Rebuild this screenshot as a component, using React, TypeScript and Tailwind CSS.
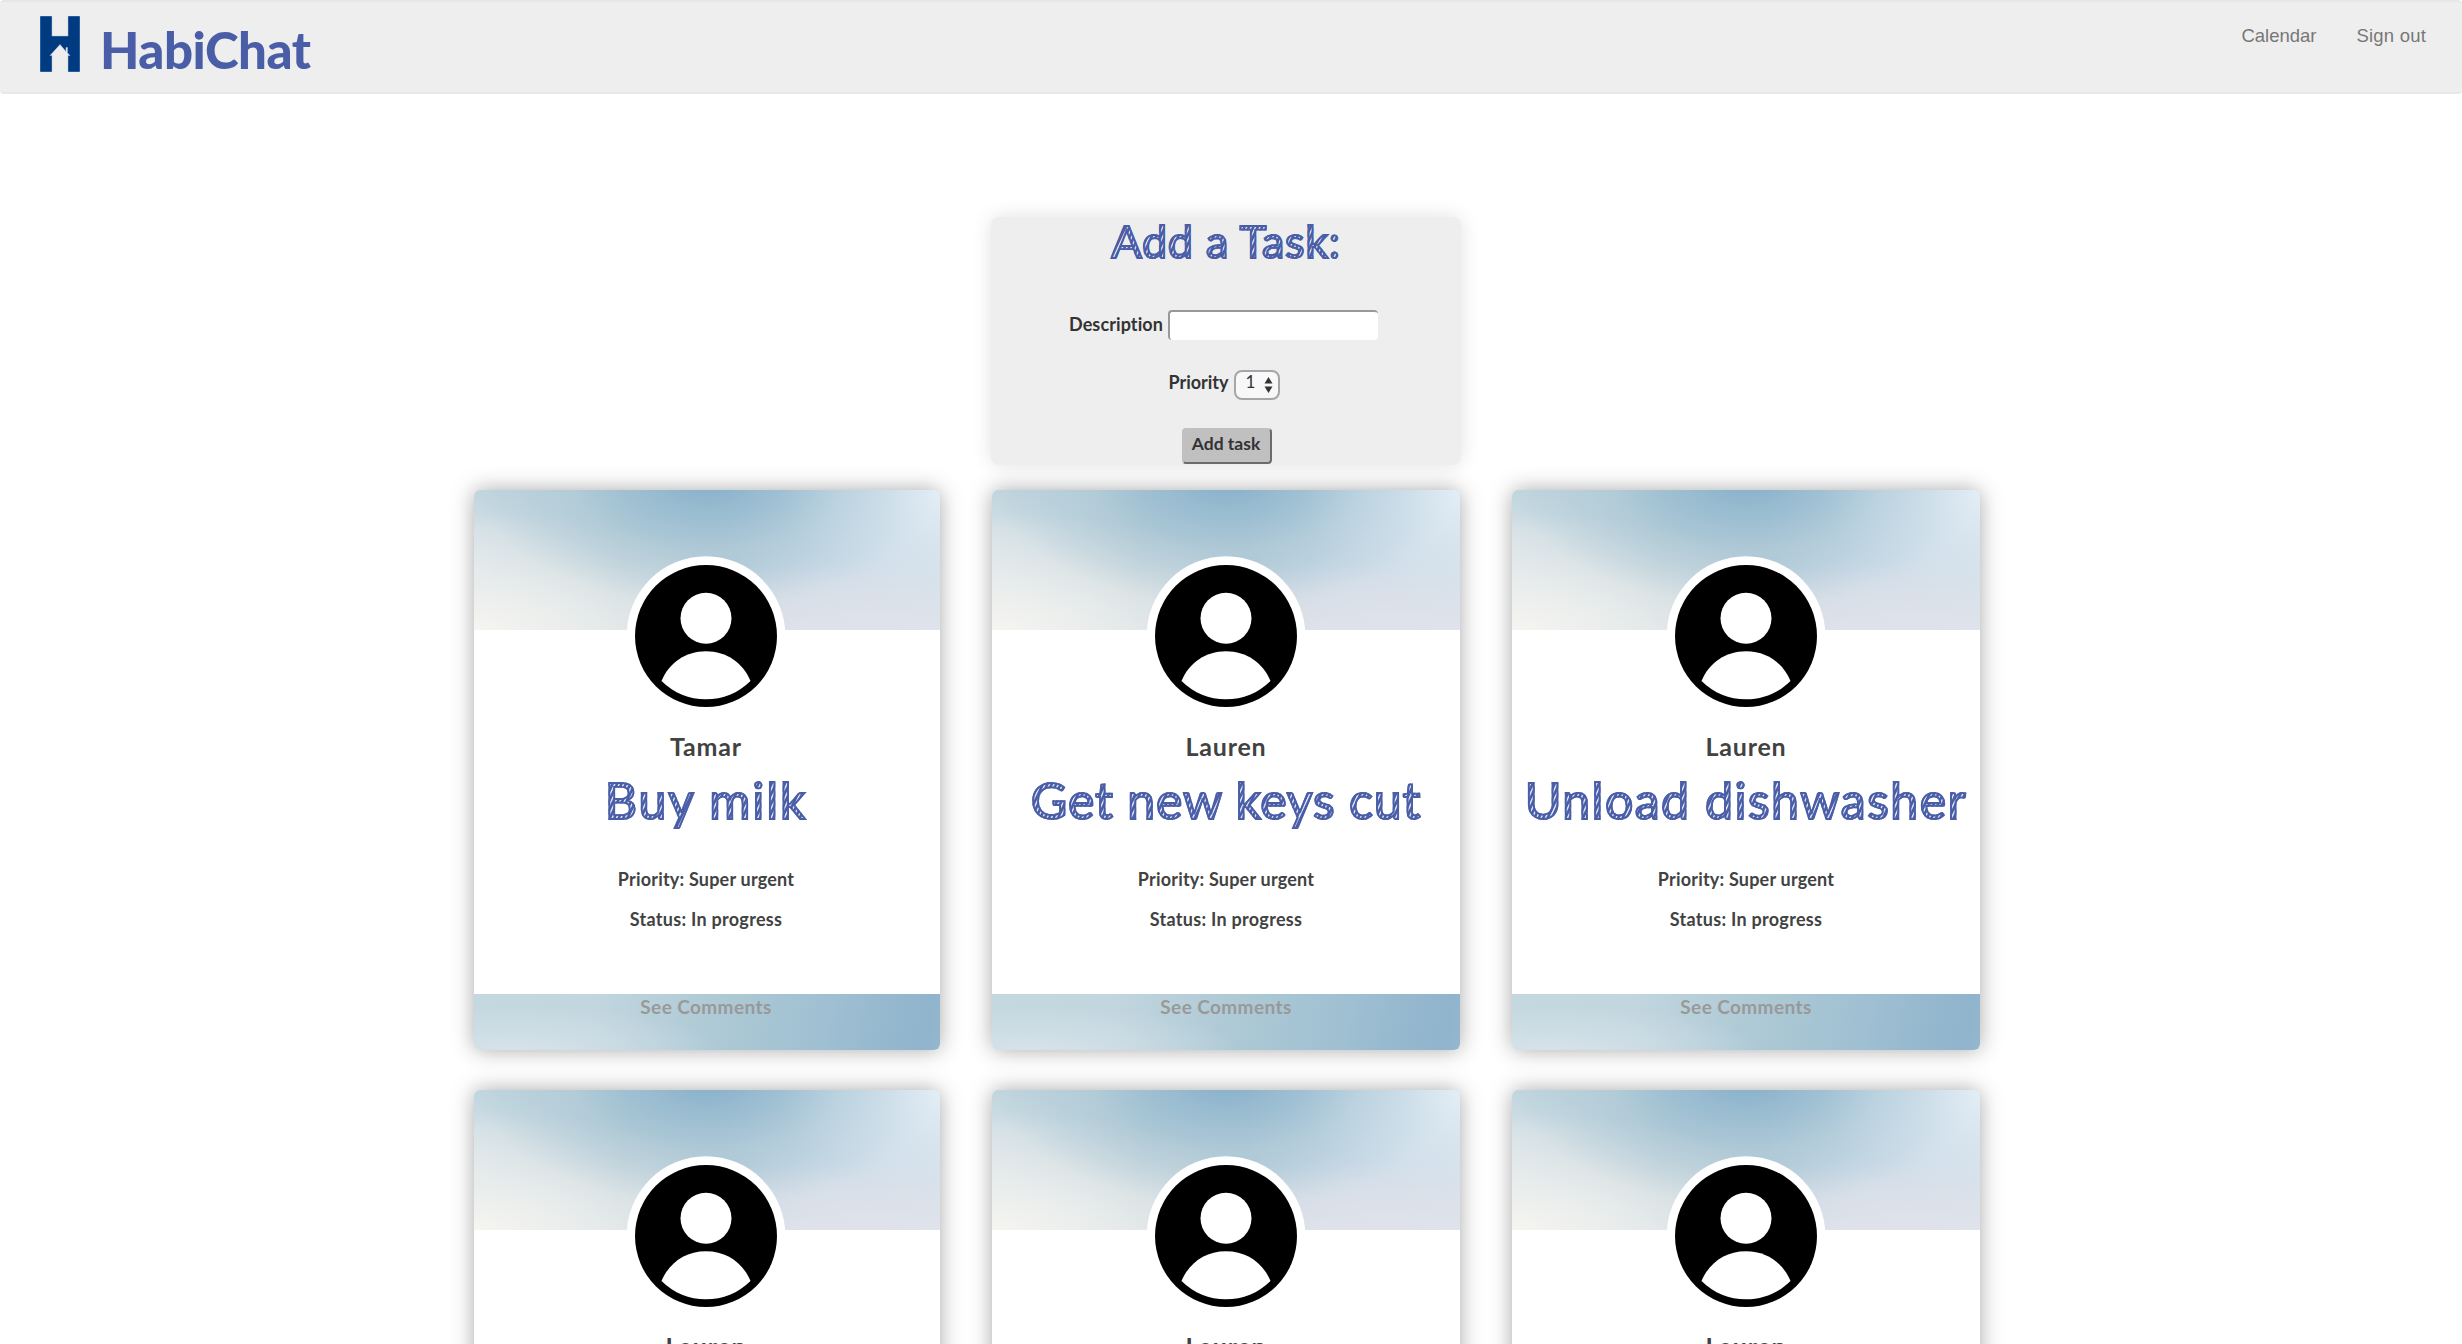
type Task = { name: string; title?: string; spacing?: string };

const TASKS: Task[] = [
  { name: 'Tamar', title: 'Buy milk', spacing: 'tracking-[1.9px]' },
  { name: 'Lauren', title: 'Get new keys cut', spacing: 'tracking-[0.8px]' },
  { name: 'Lauren', title: 'Unload dishwasher', spacing: 'tracking-[1.5px]' },
  { name: 'Lauren' },
  { name: 'Lauren' },
  { name: 'Lauren' },
];

// Hatched fill inside an outlined letter, for the sketched headings.
const SKETCH =
  "font-normal text-transparent bg-clip-text [-webkit-text-stroke:1.9px_#4a5ea8] bg-[repeating-linear-gradient(115deg,#4a5ea8_0px,#4a5ea8_1.6px,#dfe4f2_2.5px,#dfe4f2_3px,#4a5ea8_4px)]";

function Logo() {
  return (
    <svg className="h-14 w-10 shrink-0" viewBox="0 0 40 56">
      <path
        d="M0 0H12V20H28V0H40V56H28V39.500H30L27.500 37V31.500H26V35.500L20 28.500L10 39.500H12V56H0Z"
        fill="#003a80"
        stroke="#a9c4dc"
        strokeWidth="0.5"
      />
    </svg>
  );
}

function Avatar() {
  return (
    <svg className="relative z-10 mt-[66px] block h-[159px] w-[158px]" viewBox="0 0 158 159">
      <circle cx="79" cy="79.500" r="79.300" fill="#fff" />
      <circle cx="79" cy="80" r="71" fill="#000" />
      <circle cx="79" cy="62.300" r="25.500" fill="#fff" />
      <path d="M34.500 125C42 107 58 95.200 79 95.200S116 107 123.500 125C111 137.300 96 143.300 79 143.300S47 137.300 34.500 125Z" fill="#fff" />
    </svg>
  );
}

function Card({ task, inset }: { task: Task; inset: string }) {
  return (
    <article className={`${inset} relative flex h-[560px] flex-col items-center overflow-hidden rounded-[6px] bg-white text-[#424242]`}>
      <div className="absolute inset-x-0 top-0 h-[140px] bg-[radial-gradient(ellipse_50%_90%_at_50%_-8%,#86afc9_0%,#94b9cfcc_28%,#a5c4d370_58%,transparent_100%),radial-gradient(ellipse_35%_70%_at_100%_0%,#e4eef6_0%,#e0ebf480_50%,transparent_100%),radial-gradient(ellipse_65%_85%_at_0%_100%,#f5f5f1_0%,#f0f1eebb_35%,transparent_100%),radial-gradient(ellipse_30%_40%_at_6%_-10%,#bdd3dc_0%,transparent_100%),radial-gradient(ellipse_50%_60%_at_80%_110%,#e1e2ea_0%,#e0e2ea99_50%,transparent_100%),linear-gradient(180deg,#a9c8d650_0%,#c8d4dc30_55%,#dfe4e899_100%),linear-gradient(90deg,#dbe5ea_0%,#b9ced8_32%,#b5ccda_55%,#cbdce9_75%,#d7e3ee_100%)]" />
      <Avatar />
      <h3 className="mt-4 h-[30px] text-[25px]/[30px] font-bold tracking-[0.8px]">{task.name}</h3>
      {task.title && (
        <>
          <h2 className={`${SKETCH} ${task.spacing} mt-[9px] h-[60px] text-[50px]/[60px] whitespace-nowrap`}>{task.title}</h2>
          <p className="mt-[37px] text-[18px]/[24px] font-bold tracking-[0.2px]">Priority: Super urgent</p>
          <p className="mt-4 text-[18px]/[24px] font-bold tracking-[0.28px]">Status: In progress</p>
          <footer className={`${inset} absolute inset-x-0 bottom-0 h-14 bg-[radial-gradient(ellipse_45%_80%_at_8%_100%,#d6e2e9_0%,transparent_100%),linear-gradient(102deg,#c4d8df_0%,#c2d6df_25%,#abc8d4_55%,#9fbfd2_75%,#8fb4cc_96%,#95b7ce_100%)] pt-px text-center`}>
            <a className="text-[19px]/[24px] font-bold tracking-[0.4px] text-[#999]">See Comments</a>
          </footer>
        </>
      )}
    </article>
  );
}

export default function App() {
  return (
    <div className="h-[1344px] overflow-hidden bg-white font-['Lato',sans-serif] [font-variant-ligatures:none]">
      <nav className="flex h-[94px] items-start rounded-[4px] border-y-2 border-[#e7e7e7] bg-[#eee] pr-[36px] pl-10">
        <div className="mt-3.5">
          <Logo />
        </div>
        <h1 className="mt-[18px] ml-[20px] text-[51px]/[60px] font-black tracking-[-0.5px] text-[#4a5ea8]">HabiChat</h1>
        <div className="mt-[22px] ml-auto flex gap-10 font-['Liberation_Sans',sans-serif] text-[18.5px]/[24px] text-[#777]">
          <a>Calendar</a>
          <a className="tracking-[0.2px]">Sign out</a>
        </div>
      </nav>

      <form className="mt-[123px] ml-[991px] flex h-[248px] w-[470px] flex-col items-center rounded-[8px] bg-[#eee] text-[18px] font-bold text-[#333] shadow-[0_0_20px_rgba(0,0,0,0.12)]">
        <h2 className={`${SKETCH} mt-px h-[54px] text-[45px]/[46px] tracking-[0.7px]`}>Add a Task:</h2>
        <div className="mt-[38px] mr-[5px] flex h-[30px] items-center gap-[5px]">
          <label className="pb-0.5 leading-[28px] tracking-[0.1px]">Description</label>
          <input className="h-[30px] w-[210px] rounded-[4px] border-t-2 border-l-2 border-[#999] bg-white" />
        </div>
        <div className="mt-[30px] mr-[4px] flex h-[30px] gap-[5px]">
          <label className="leading-[24px]">Priority</label>
          <div className="flex h-[30px] w-[46px] rounded-[8px] border-2 border-[#a6a6a6] bg-[#f8f8f8] pl-[10px] font-normal">
            <span className="w-4 text-[17px]/[20px]">1</span>
            <svg className="mt-[4px] ml-[2px] h-[18px] w-[9px]" viewBox="0 0 9 18">
              <path d="M4.500 1L8.500 7.500H.5ZM4.500 17L.5 10.500H8.500Z" fill="#333" />
            </svg>
          </div>
        </div>
        <button
          type="button"
          className="mt-7 ml-[2px] h-9 w-[90px] rounded-[4px] border-2 border-t-[#c0c0c0] border-r-[#6b6b6b] border-b-[#6b6b6b] border-l-[#c0c0c0] bg-[#c0c0c0] pr-[2px] pb-[4px] text-[17.500px]/[26px]"
        >
          Add task
        </button>
      </form>

      <main className="mt-[25px] ml-[474px] grid w-[1506px] grid-cols-[466px_468px_468px] gap-x-[52px] gap-y-10">
        {TASKS.map((task, i) => (
          <div key={i} className="rounded-[6px] shadow-[0_0_22px_rgba(0,0,0,0.34)]">
            <Card task={task} inset={i % 3 === 0 ? 'pr-[2px]' : 'pr-0'} />
          </div>
        ))}
      </main>
    </div>
  );
}
